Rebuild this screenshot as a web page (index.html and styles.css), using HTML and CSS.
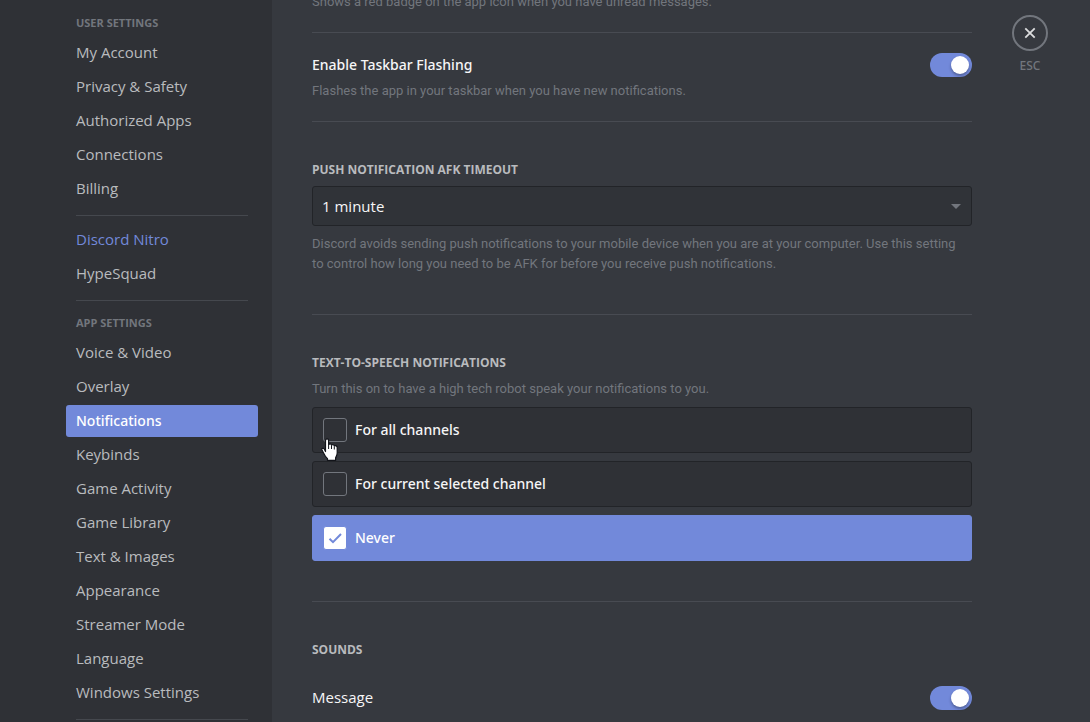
FILE: index.html
```html
<!DOCTYPE html>
<html lang="en">
<head>
<meta charset="utf-8">
<title>Notifications</title>
<link rel="stylesheet" href="styles.css">
</head>
<body>
<div class="settings">
  <nav class="sidebar" aria-label="Settings">
    <h2 class="nav-heading">User Settings</h2>
    <a class="nav-item" href="#account">My Account</a>
    <a class="nav-item" href="#privacy">Privacy &amp; Safety</a>
    <a class="nav-item" href="#apps">Authorized Apps</a>
    <a class="nav-item" href="#connections">Connections</a>
    <a class="nav-item" href="#billing">Billing</a>
    <hr class="nav-divider">
    <a class="nav-item nav-item-accent" href="#nitro">Discord Nitro</a>
    <a class="nav-item" href="#hypesquad">HypeSquad</a>
    <hr class="nav-divider">
    <h2 class="nav-heading">App Settings</h2>
    <a class="nav-item" href="#voice">Voice &amp; Video</a>
    <a class="nav-item" href="#overlay">Overlay</a>
    <a class="nav-item nav-item-selected" href="#notifications" aria-current="page">Notifications</a>
    <a class="nav-item" href="#keybinds">Keybinds</a>
    <a class="nav-item" href="#activity">Game Activity</a>
    <a class="nav-item" href="#library">Game Library</a>
    <a class="nav-item" href="#text">Text &amp; Images</a>
    <a class="nav-item" href="#appearance">Appearance</a>
    <a class="nav-item" href="#streamer">Streamer Mode</a>
    <a class="nav-item" href="#language">Language</a>
    <a class="nav-item" href="#windows">Windows Settings</a>
    <hr class="nav-divider">
  </nav>

  <main class="content">
    <div class="column">
      <p class="note">Shows a red badge on the app icon when you have unread messages.</p>
      <hr class="divider divider-near">

      <section class="setting">
        <div class="setting-row">
          <label class="setting-title" for="flash">Enable Taskbar Flashing</label>
          <input class="switch" id="flash" type="checkbox" role="switch" checked>
        </div>
        <p class="note note-under-title">Flashes the app in your taskbar when you have new notifications.</p>
      </section>
      <hr class="divider divider-near">

      <section class="group">
        <label class="group-heading" for="timeout">Push Notification AFK Timeout</label>
        <div class="select-box">
          <select class="select" id="timeout">
            <option>1 minute</option>
            <option>5 minutes</option>
            <option>10 minutes</option>
          </select>
          <svg class="select-arrow" width="10" height="5" viewBox="0 0 10 5" aria-hidden="true"><path d="M0 0h10L5 5z" fill="#72767d"/></svg>
        </div>
        <p class="note">Discord avoids sending push notifications to your mobile device when you are at your computer. Use this setting<br>to control how long you need to be AFK for before you receive push notifications.</p>
      </section>
      <hr class="divider">

      <section class="group">
        <h3 class="group-heading">Text-to-Speech Notifications</h3>
        <p class="note">Turn this on to have a high tech robot speak your notifications to you.</p>
        <label class="option">
          <span class="check-wrap">
            <input class="check" type="radio" name="tts">
            <svg class="cursor" width="18" height="24" viewBox="0 0 18 24" aria-hidden="true"><path d="M4.500 13.500V2.800C4.500.3 7.600.3 7.600 2.800V6.600C8.600 5.500 10.300 5.900 10.500 7.100 11.600 6.200 13 6.700 13.300 7.900 14.700 7.200 16.200 8 16.200 9.600V15C16.200 17.400 15 18.600 14.600 20V22.300H6.500V20.600C5.200 19.400 3.400 17 2.700 15.200L1 12C.4 10.400 2.300 9.600 3.200 11Z" fill="#fff" stroke="#12141a" stroke-width="1.200" stroke-linejoin="round"/><path d="M7.600 6.500V11M10.500 7.300V11M13.300 8.300V11.500" fill="none" stroke="#12141a"/></svg>
          </span>
          <span class="option-text">For all channels</span>
        </label>
        <label class="option">
          <span class="check-wrap"><input class="check" type="radio" name="tts"></span>
          <span class="option-text">For current selected channel</span>
        </label>
        <label class="option option-selected">
          <span class="check-wrap">
            <input class="check" type="radio" name="tts" checked>
            <svg class="tick" width="18" height="18" viewBox="0 0 18 18" aria-hidden="true"><path d="M3.500 9.700 7 13.200 15 5" fill="none" stroke="#7289da" stroke-width="2"/></svg>
          </span>
          <span class="option-text">Never</span>
        </label>
      </section>
      <hr class="divider">

      <section class="group">
        <h3 class="group-heading">Sounds</h3>
        <div class="setting-row sound-row">
          <label class="setting-title setting-title-plain" for="message">Message</label>
          <input class="switch" id="message" type="checkbox" role="switch" checked>
        </div>
      </section>
    </div>

    <div class="close">
      <button class="close-button" type="button" aria-labelledby="esc">
        <svg width="12" height="12" viewBox="0 0 12 12" aria-hidden="true"><path d="M1.300 1.300 10.700 10.700M10.700 1.300 1.300 10.700" fill="none" stroke="#dcddde" stroke-width="1.800"/></svg>
      </button>
      <span class="close-label" id="esc">ESC</span>
    </div>
  </main>
</div>
</body>
</html>
```
FILE: styles.css
```css
* {
  box-sizing: border-box;
}

body {
  margin: 0;
  background: #36393f;
  color: #f6f6f7;
  font-family: "Open Sans", "Noto Sans", sans-serif;
  font-size: 15px;
  line-height: 22px;
}

h2, h3, p, hr {
  margin: 0;
}

.settings {
  display: flex;
  height: 100vh;
  overflow: hidden;
}

.sidebar {
  flex: 0 0 272px;
  display: flex;
  flex-direction: column;
  align-items: flex-end;
  gap: 2px;
  padding: 9px 14px 0 20px;
  background: #2f3136;
}

.sidebar > * {
  flex: none;
  width: 192px;
}

.nav-heading {
  margin-bottom: -2px;
  padding: 6px 10px;
  color: #72767d;
  font-size: 11px;
  font-weight: 700;
  line-height: 16px;
  text-transform: uppercase;
}

.nav-item {
  padding: 4px 10px 6px;
  border-radius: 3px;
  color: #b9bbbe;
  text-decoration: none;
}

.nav-item-accent {
  color: #7289da;
}

.nav-item-selected {
  padding: 5px 10px;
  background: #7289da;
  color: #fff;
}

.nav-item-selected,
.setting-title,
.option-text {
  font-family: "Noto Sans", sans-serif;
  font-size: 14px;
  font-weight: 500;
}

.sidebar > .nav-divider {
  width: 172px;
  height: 1px;
  margin: 8px 10px 6px;
  border: 0;
  background: #45484e;
}

.content {
  flex: 1;
  display: flex;
  align-items: flex-start;
  gap: 40px;
  min-width: 0;
  padding: 0 40px;
}

/* The column is scrolled part of the way down its page. */
.column {
  flex: 0 1 660px;
  margin-top: -8px;
}

.note {
  color: #72767d;
  font-family: Roboto, sans-serif;
  font-size: 13px;
  line-height: 20px;
}

.note-under-title {
  margin-top: 4px;
}

.divider {
  height: 1px;
  margin: 40px 0;
  border: 0;
  background: #484b52;
}

.divider-near {
  margin-top: 20px;
}

.setting {
  margin-top: -20px;
}

.setting-row {
  display: flex;
  align-items: center;
  justify-content: space-between;
}

.setting-title-plain {
  padding-bottom: 2px;
  font-family: inherit;
  font-size: 15px;
  font-weight: 400;
}

.switch {
  appearance: none;
  display: flex;
  align-items: center;
  width: 42px;
  height: 24px;
  margin: 0;
  padding: 3px;
  border-radius: 12px;
  background: #7289da;
}

.switch::before {
  content: "";
  width: 18px;
  height: 18px;
  margin-left: auto;
  border-radius: 50%;
  background: #fff;
  box-shadow: 0 2px 3px rgba(0, 0, 0, .3);
}

.group {
  display: flex;
  flex-direction: column;
  gap: 8px;
}

.group-heading {
  color: #b9bbbe;
  font-size: 12px;
  font-weight: 700;
  line-height: 16px;
  text-transform: uppercase;
}

.select-box {
  display: grid;
  align-items: center;
}

.select,
.select-arrow {
  grid-area: 1 / 1;
}

.select {
  appearance: none;
  width: 100%;
  height: 40px;
  padding: 0 9px;
  border: 1px solid #222428;
  border-radius: 3px;
  background: #303338;
  color: #f6f6f7;
  font: inherit;
}

.select-arrow {
  justify-self: end;
  margin-right: 11px;
  pointer-events: none;
}

.option {
  display: flex;
  align-items: center;
  gap: 8px;
  height: 46px;
  padding: 0 10px;
  border: 1px solid #222428;
  border-radius: 3px;
  background: #2f3136;
}

.option-selected {
  border-color: #7289da;
  background: #7289da;
  color: #fff;
}

.check-wrap {
  position: relative;
  display: grid;
  place-items: center;
}

.check,
.tick {
  grid-area: 1 / 1;
}

.check {
  appearance: none;
  width: 24px;
  height: 24px;
  margin: 0;
  border: 1px solid #72767d;
  border-radius: 3px;
}

.check:checked {
  border-color: #7289da;
  background: #fff;
}

.tick {
  pointer-events: none;
}

.cursor {
  position: absolute;
  top: 20px;
  left: -2px;
  pointer-events: none;
}

.sound-row {
  margin-top: 20px;
}

.close {
  flex: none;
  display: flex;
  flex-direction: column;
  align-items: center;
  gap: 6px;
  width: 36px;
  margin-top: 15px;
}

.close-button {
  display: grid;
  place-items: center;
  width: 36px;
  height: 36px;
  padding: 0;
  border: 2px solid #72767d;
  border-radius: 50%;
  background: none;
}

.close-label {
  color: #72767d;
  font-family: "Noto Sans", sans-serif;
  font-size: 12px;
  font-weight: 500;
  line-height: 18px;
}
```
